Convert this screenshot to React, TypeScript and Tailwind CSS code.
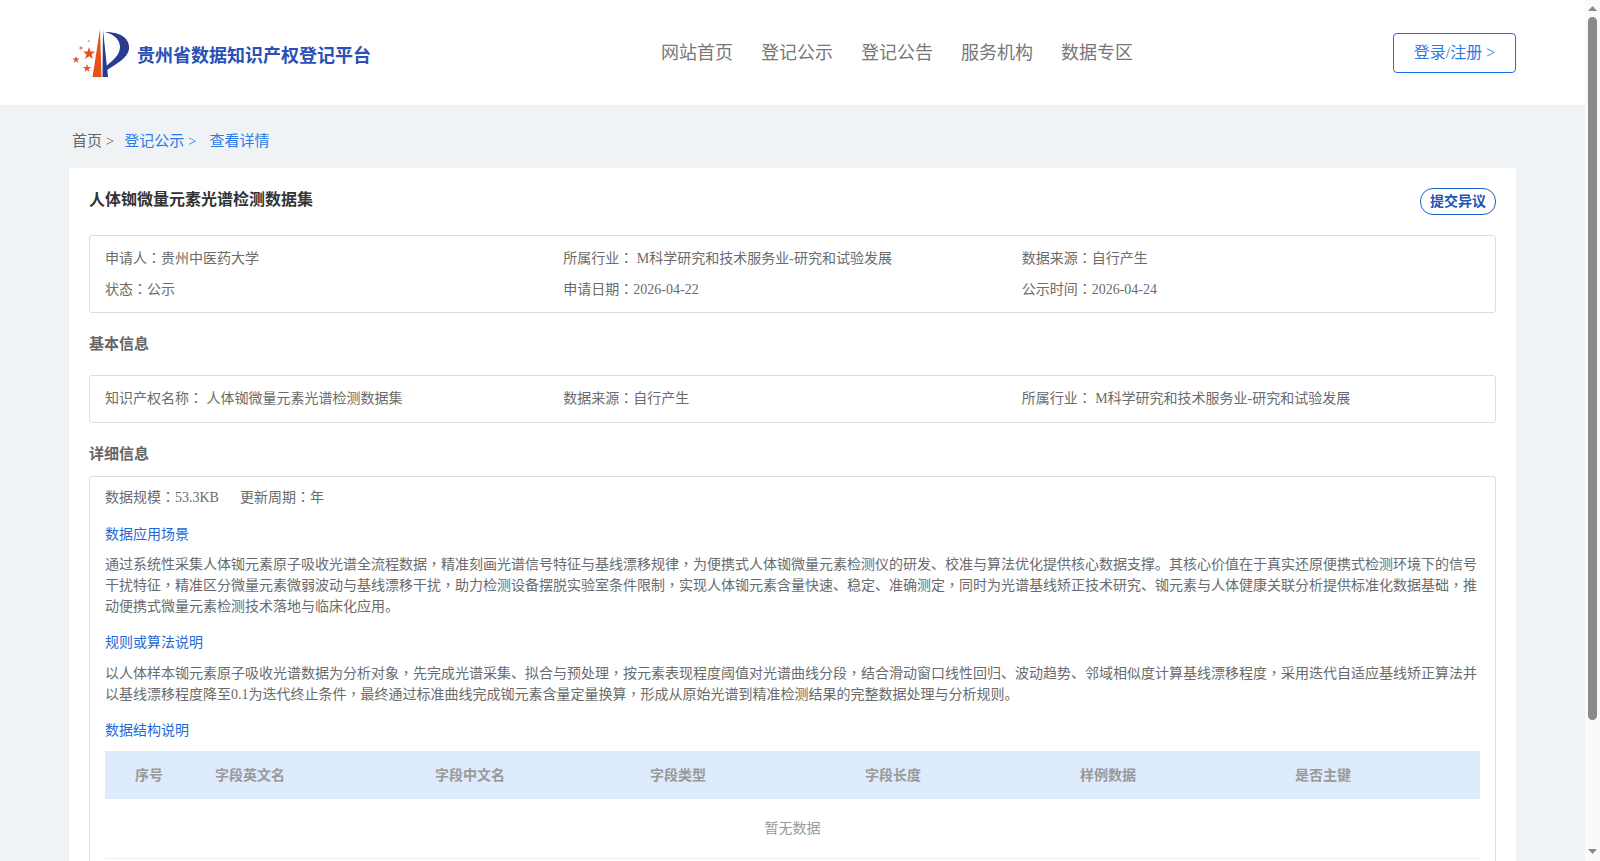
const FONT = "font-['Liberation_Serif','Noto_Sans_CJK_SC',serif]";

const navItems = ['网站首页', '登记公示', '登记公告', '服务机构', '数据专区'];
const tableCols = ['字段英文名', '字段中文名', '字段类型', '字段长度', '样例数据', '是否主键'];

// the reference's comma and colon sit centred in their cell, as in the TC font
function Zh({ text }: { text: string }) {
  return (
    <>
      {text.split(/([，：])/).map((part, i) =>
        i % 2 === 1 ? (
          <span key={i} className="font-['Noto_Sans_CJK_TC',serif] leading-none">
            {part}
          </span>
        ) : (
          part
        ),
      )}
    </>
  );
}

function Logo() {
  return (
    <svg width="60" height="50" viewBox="72 28 60 50" className="shrink-0">
      <path d="M100 29 L101.5 77 L92.5 77 Z" fill="#e8501e" />
      <path d="M103 30 L108 77 L102.5 77 Z" fill="#2a3a8f" />
      <path d="M105 32 C120 32 130 38 129 49 C128 58 116 64 107 70 L106.5 66 C113 60 120 55 120 47 C120 39 113 34 105 32 Z" fill="#2a3a8f" />
      <polygon points="89,47 90.5,51.5 95,51.5 91.5,54.5 93,59 89,56.2 85,59 86.5,54.5 83,51.5 87.5,51.5" fill="#e8501e" />
      <polygon points="76,56 76.9,58.5 79.5,58.5 77.4,60.2 78.2,62.8 76,61.3 73.8,62.8 74.6,60.2 72.5,58.5 75.1,58.5" fill="#e8501e" />
      <polygon points="87,64 88,67 91.2,67 88.6,68.9 89.6,72 87,70.1 84.4,72 85.4,68.9 82.8,67 86,67" fill="#e8501e" />
      <circle cx="81" cy="48" r="1.6" fill="#ef7a50" />
      <circle cx="89" cy="41" r="1.1" fill="#f0a080" />
    </svg>
  );
}

function Scrollbar() {
  return (
    <div className="flex h-full w-[15px] shrink-0 flex-col items-center bg-[#fafafa]">
      <svg width="9" height="5" viewBox="0 0 9 5" className="mt-[6px] shrink-0">
        <path d="M4.5 0 L9 5 L0 5 Z" fill="#8a8a8a" />
      </svg>
      <div className="mt-[6px] h-[703px] w-[9px] shrink-0 rounded-[5px] bg-[#8a8a8a]" />
      <svg width="9" height="5" viewBox="0 0 9 5" className="mb-[7px] mt-auto shrink-0">
        <path d="M0 0 L9 0 L4.5 5 Z" fill="#8a8a8a" />
      </svg>
    </div>
  );
}

function SectionTitle({ children }: { children: React.ReactNode }) {
  return <h3 className="text-[15px] font-bold leading-[21px] text-[#666]">{children}</h3>;
}

function BlueLabel({ children }: { children: React.ReactNode }) {
  return <p className="text-[14px] leading-[21px] text-[#1f6ad8]">{children}</p>;
}

export default function App() {
  return (
    <div className={`${FONT} flex h-[861px] overflow-hidden text-[14px] text-[#6b6b6b]`}>
      <div className="min-w-0 flex-1 overflow-hidden bg-[#eff3f6]">
        {/* Header */}
        <header className="flex h-[105px] items-center bg-white pl-[72px] pr-[69px]">
          <div className="flex w-[589px] items-center">
            <Logo />
            <span className="ml-[5px] mt-[8px] text-[18px] font-bold text-[#2a50b8]">贵州省数据知识产权登记平台</span>
          </div>
          <nav className="mt-[2px] flex gap-[28px] text-[18px] text-[#777]">
            {navItems.map((item) => (
              <span key={item}>{item}</span>
            ))}
          </nav>
          <button className="ml-auto h-[40px] w-[123px] rounded-[4px] border border-[#1a6ee6] pt-[1px] text-[16px] text-[#2a7be6]">
            登录/注册 &gt;
          </button>
        </header>

        {/* Breadcrumb */}
        <div className="flex h-[63px] items-center pl-[72px] pt-[9px] text-[15px]">
          <span className="text-[#666]">首页 &gt;</span>
          <span className="ml-[10px] text-[#2a7be6]">登记公示 &gt;</span>
          <span className="ml-[13px] text-[#2a7be6]">查看详情</span>
        </div>

        {/* Card */}
        <main className="mx-[69px] bg-white px-[20px] pb-[100px] pt-[20px]">
          <div className="flex items-start justify-between">
            <h2 className="text-[16px] font-bold leading-[24px] text-[#333]">人体铷微量元素光谱检测数据集</h2>
            <button className="h-[27px] w-[76px] rounded-[13px] border border-[#1a62d0] text-[14px] font-bold text-[#1d55b5]">
              提交异议
            </button>
          </div>

          <div className="mt-[20px] grid h-[78px] grid-cols-3 content-center gap-y-[10px] rounded-[3px] border border-[#ddd] px-[15px] pb-[1px] leading-[21px]">
            <span><Zh text="申请人：贵州中医药大学" /></span>
            <span><Zh text="所属行业： M科学研究和技术服务业-研究和试验发展" /></span>
            <span><Zh text="数据来源：自行产生" /></span>
            <span><Zh text="状态：公示" /></span>
            <span><Zh text="申请日期：2026-04-22" /></span>
            <span><Zh text="公示时间：2026-04-24" /></span>
          </div>

          <div className="mt-[21px]">
            <SectionTitle>基本信息</SectionTitle>
          </div>

          <div className="mt-[20px] grid h-[48px] grid-cols-3 items-center rounded-[3px] border border-[#ddd] px-[15px] pb-[2px] leading-[21px]">
            <span><Zh text="知识产权名称： 人体铷微量元素光谱检测数据集" /></span>
            <span><Zh text="数据来源：自行产生" /></span>
            <span><Zh text="所属行业： M科学研究和技术服务业-研究和试验发展" /></span>
          </div>

          <div className="mt-[21px]">
            <SectionTitle>详细信息</SectionTitle>
          </div>

          <div className="mt-[11px] rounded-[3px] border border-[#ddd] px-[15px] pb-[60px] pt-[10px] leading-[21px]">
            <div className="flex gap-[21px]">
              <span><Zh text="数据规模：53.3KB" /></span>
              <span><Zh text="更新周期：年" /></span>
            </div>

            <div className="mt-[16px]">
              <BlueLabel>数据应用场景</BlueLabel>
            </div>
            <p className="mt-[9px]">
              <Zh text="通过系统性采集人体铷元素原子吸收光谱全流程数据，精准刻画光谱信号特征与基线漂移规律，为便携式人体铷微量元素检测仪的研发、校准与算法优化提供核心数据支撑。其核心价值在于真实还原便携式检测环境下的信号干扰特征，精准区分微量元素微弱波动与基线漂移干扰，助力检测设备摆脱实验室条件限制，实现人体铷元素含量快速、稳定、准确测定，同时为光谱基线矫正技术研究、铷元素与人体健康关联分析提供标准化数据基础，推动便携式微量元素检测技术落地与临床化应用。" />
            </p>

            <div className="mt-[15px]">
              <BlueLabel>规则或算法说明</BlueLabel>
            </div>
            <p className="mt-[10px]">
              <Zh text="以人体样本铷元素原子吸收光谱数据为分析对象，先完成光谱采集、拟合与预处理，按元素表现程度阈值对光谱曲线分段，结合滑动窗口线性回归、波动趋势、邻域相似度计算基线漂移程度，采用迭代自适应基线矫正算法并以基线漂移程度降至0.1为迭代终止条件，最终通过标准曲线完成铷元素含量定量换算，形成从原始光谱到精准检测结果的完整数据处理与分析规则。" />
            </p>

            <div className="mt-[15px]">
              <BlueLabel>数据结构说明</BlueLabel>
            </div>

            {/* Table */}
            <div className="mt-[10px]">
              <div className="grid h-[48px] grid-cols-[88px_220px_215px_215px_215px_215px_1fr] items-center bg-[#deebfd] font-bold text-[#999]">
                <span className="text-center">序号</span>
                {tableCols.map((col) => (
                  <span key={col} className="pl-[22px]">
                    {col}
                  </span>
                ))}
              </div>
              <div className="flex h-[60px] items-center justify-center border-b border-[#ebeef5] text-[#999]">暂无数据</div>
            </div>
          </div>
        </main>
      </div>
      <Scrollbar />
    </div>
  );
}
